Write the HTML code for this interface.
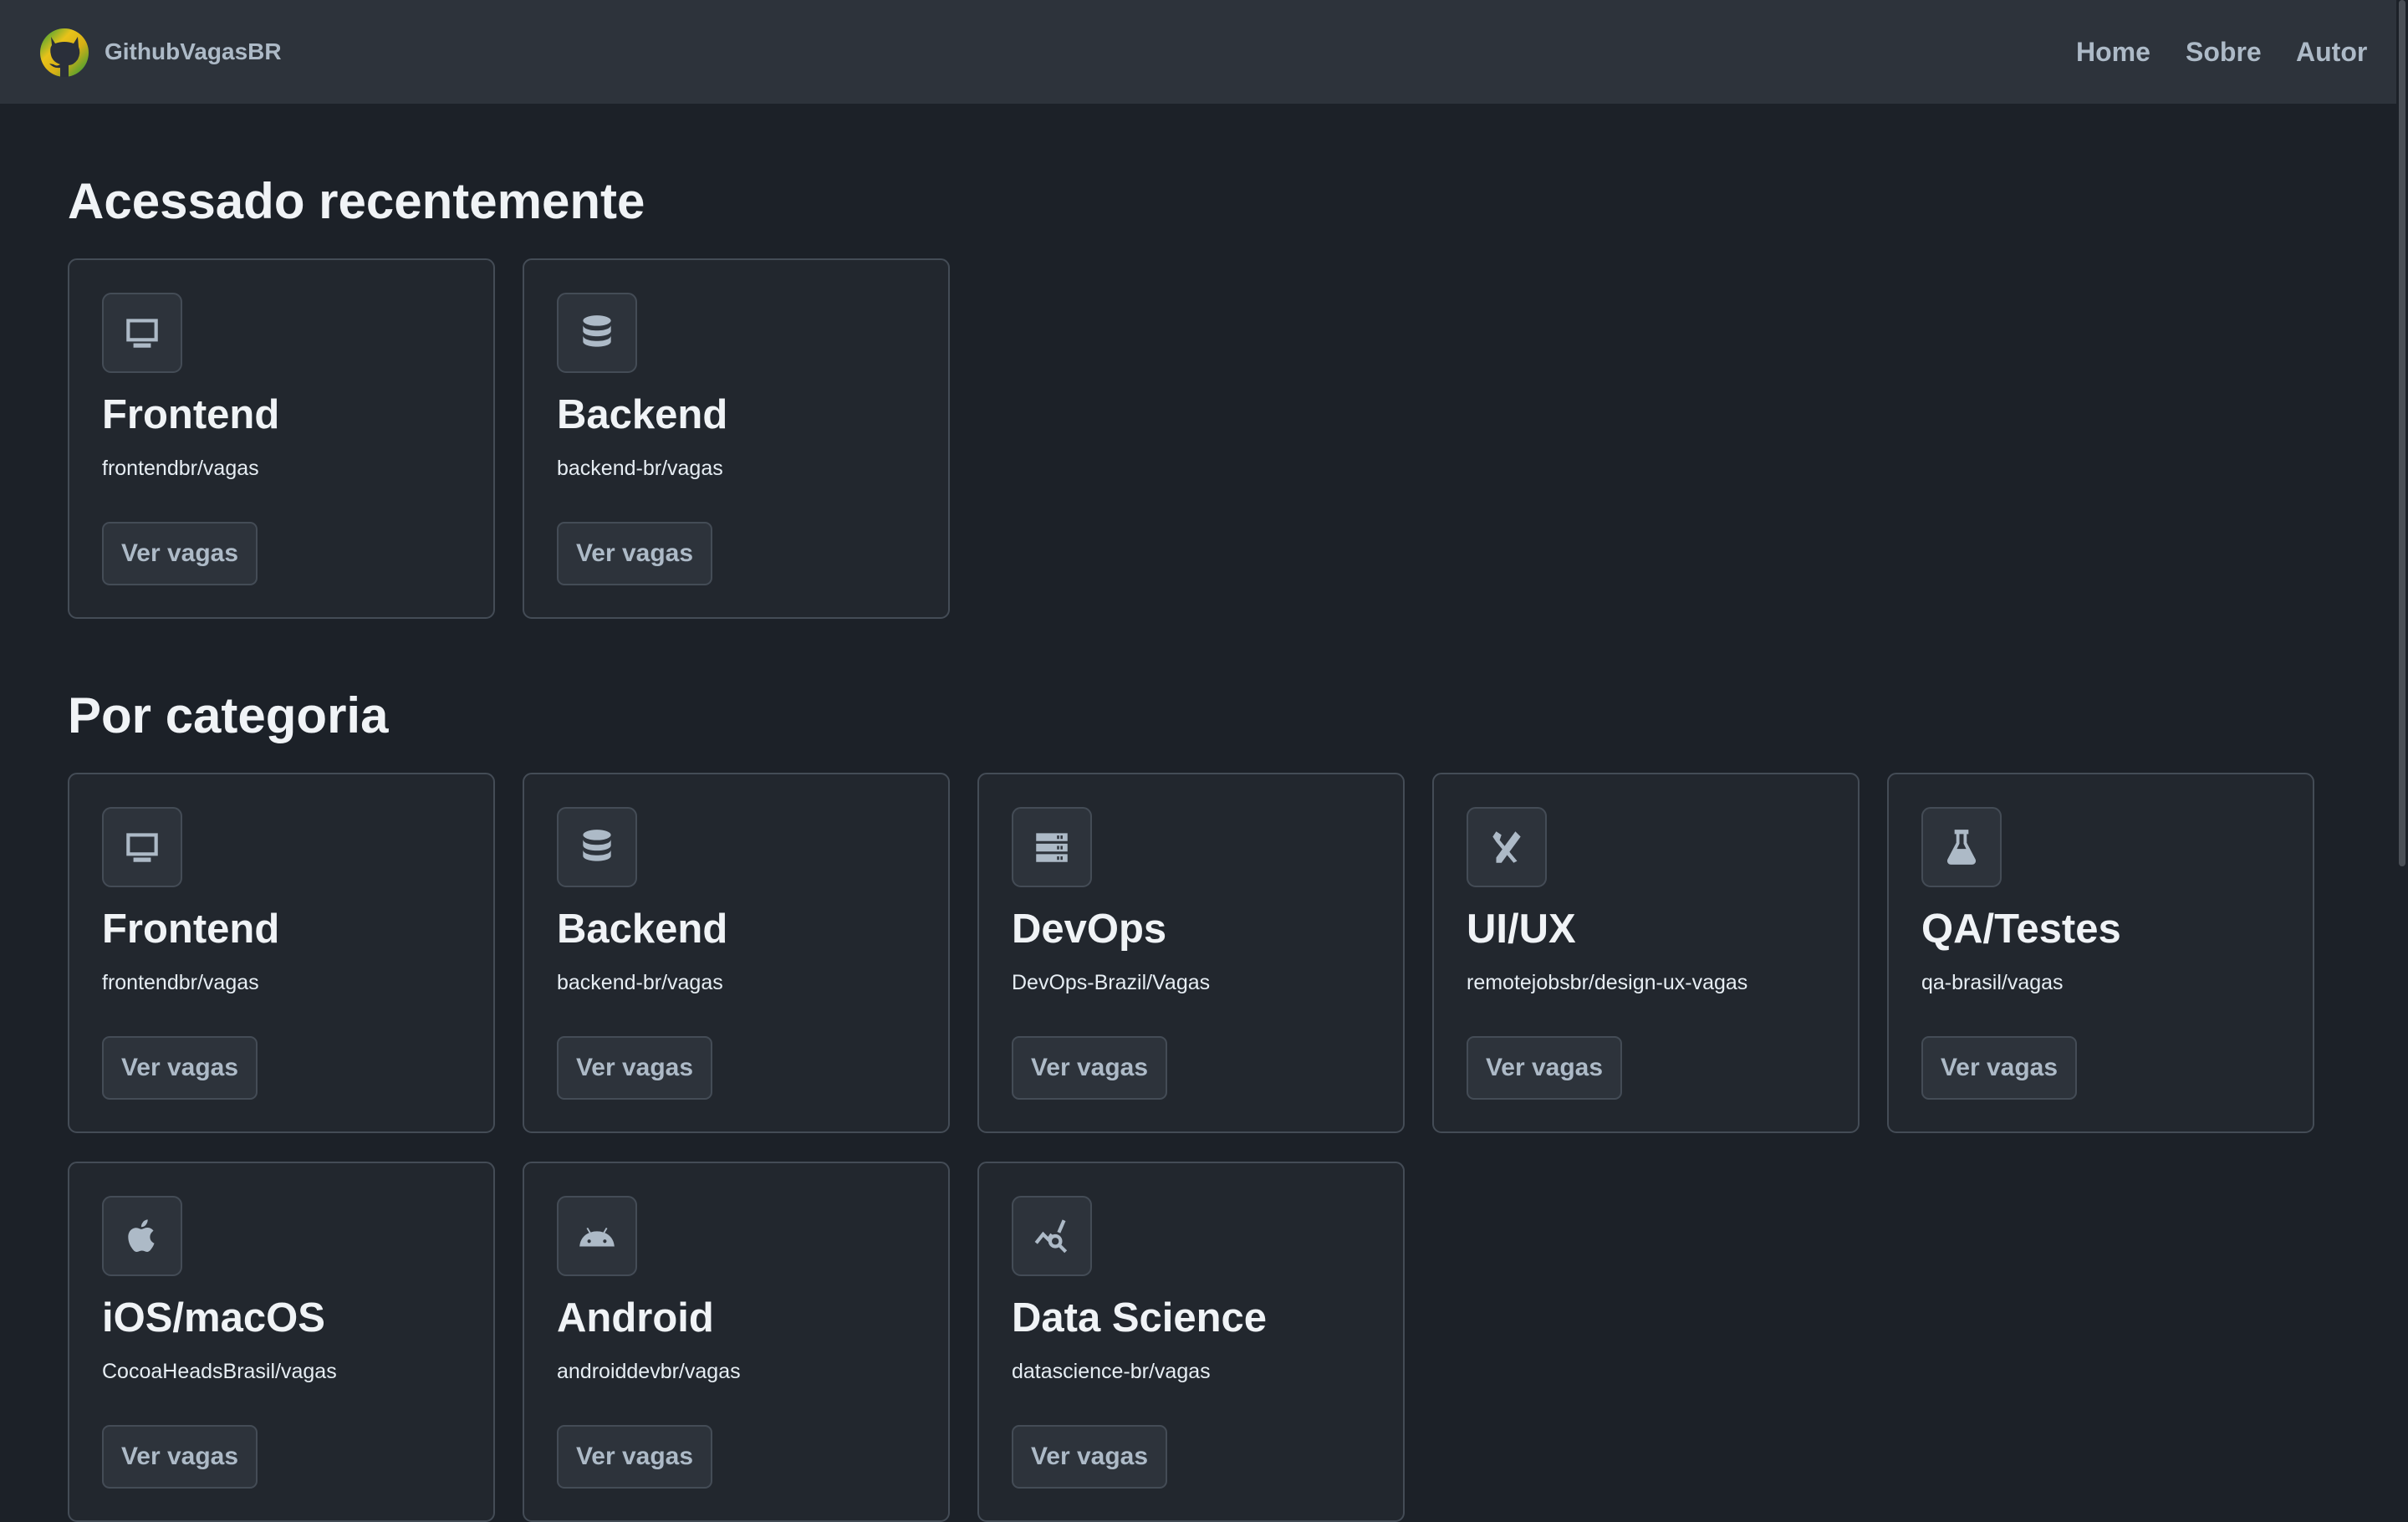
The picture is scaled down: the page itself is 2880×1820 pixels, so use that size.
<!DOCTYPE html>
<html><head><meta charset="utf-8"><style>
*{margin:0;padding:0;box-sizing:border-box}
html,body{width:2880px;height:1800px;overflow:hidden;background:#1c2128;font-family:"Liberation Sans",sans-serif}
.hdr{position:absolute;left:0;top:0;width:2866px;height:124px;background:#2d333b}
.brand{position:absolute;left:125px;top:44px;font-size:28px;font-weight:700;color:#adbac7;line-height:36px}
.nav{position:absolute;top:42px;font-size:32px;font-weight:700;color:#adbac7;line-height:40px}
h2{position:absolute;left:81px;font-size:60px;font-weight:700;color:#f0f3f6;line-height:76px}
.card{position:absolute;width:511px;height:431px;background:#22272e;border:2px solid #444c56;border-radius:11px}
.ib{position:absolute;left:39px;top:39px;width:96px;height:96px;background:#2d333b;border:2px solid #444c56;border-radius:11px;display:flex;align-items:center;justify-content:center}
.ib svg{width:50px;height:50px;fill:#adbac7}
.t{position:absolute;left:39px;top:153px;font-size:49px;font-weight:700;color:#f0f3f6;line-height:64px}
.r{position:absolute;left:39px;top:233px;font-size:25px;color:#e6edf3;line-height:32px}
.b{position:absolute;left:39px;top:313px;width:186px;height:76px;background:#2d333b;border:2px solid #444c56;border-radius:9px;font-size:30px;font-weight:700;color:#adbac7;line-height:72px;text-align:center}
.sb{position:absolute;right:0;top:0;width:14px;height:1800px;background:#1c2128}
.sb div{position:absolute;left:3px;top:0;width:8px;height:1036px;background:#4a4f56;border-radius:4px}
</style></head><body>
<div class="hdr">
<svg style="position:absolute;left:46px;top:32px" width="62" height="62" viewBox="0 0 62 62">
<defs><linearGradient id="g" x1="0" y1="0" x2="1" y2="1"><stop offset="0" stop-color="#1c9a3a"/><stop offset=".35" stop-color="#e8c21a"/><stop offset=".6" stop-color="#d8b015"/><stop offset="1" stop-color="#1c9a3a"/></linearGradient></defs>
<circle cx="31" cy="31" r="29" fill="url(#g)"/>
<path d="M15 12 L20 20 Q31 16 42 20 L47 12 L48 24 Q51 31 47 39 Q42 46 36 46 L36 60 L26 60 L26 49 Q18 50 13 44 L18 45 Q22 48 26 45 Q17 42 15 34 Q13 26 16 22 Z" fill="#2a2f3a"/>
</svg>
<div class="brand">GithubVagasBR</div>
<div class="nav" style="left:2483px">Home</div>
<div class="nav" style="left:2614px">Sobre</div>
<div class="nav" style="left:2746px">Autor</div>
</div>

<h2 style="top:203px">Acessado recentemente</h2>
<h2 style="top:818px">Por categoria</h2>

<svg width="0" height="0" style="position:absolute">
<symbol id="mon" viewBox="0 0 24 24"><path d="M3 4h18v13H3z M5 6v9h14V6z" fill-rule="evenodd"/><rect x="7" y="18" width="10" height="2.5"/></symbol>
<symbol id="db" viewBox="0 0 24 24"><ellipse cx="12" cy="5" rx="8" ry="3"/><path d="M4 7.5c0 2 3.6 3.2 8 3.2s8-1.2 8-3.2V11c0 1.8-3.6 3-8 3s-8-1.2-8-3z"/><path d="M4 13.5c0 2 3.6 3.2 8 3.2s8-1.2 8-3.2V17c0 1.8-3.6 3-8 3s-8-1.2-8-3z"/></symbol>
<symbol id="srv" viewBox="0 0 24 24"><path d="M3 4h18v4.5H3zM3 10h18v4.5H3zM3 16h18v4.5H3z"/><g fill="#2d333b"><rect x="15" y="5.3" width="1.2" height="2"/><rect x="17" y="5.3" width="1.2" height="2"/><rect x="15" y="11.3" width="1.2" height="2"/><rect x="17" y="11.3" width="1.2" height="2"/><rect x="15" y="17.3" width="1.2" height="2"/><rect x="17" y="17.3" width="1.2" height="2"/></g></symbol>
<symbol id="tool" viewBox="0 0 24 24"><path d="M6 3l3 2-1 3 10 12-2 1L6 9 4 6z"/><path d="M17 3l3 3-11 15H6v-3z"/></symbol>
<symbol id="flask" viewBox="0 0 24 24"><path d="M8 2h8v2.5h-1v5l5 9.5c.6 1.5-.3 3-2 3H6c-1.7 0-2.6-1.5-2-3l5-9.5v-5H8z M10.8 4.5v5.5l-1.5 3h5.4l-1.5-3V4.5z" fill-rule="evenodd"/></symbol>
<symbol id="apple" viewBox="0 0 24 24"><path d="M16.5 12.6c0-2.4 2-3.5 2-3.6-1.1-1.6-2.8-1.8-3.4-1.8-1.4-.1-2.8.9-3.5.9s-1.8-.8-3-.8C6.5 7.3 4 8.9 4 12.6c0 2.3.9 4.7 2 6.2.9 1.3 1.7 2.4 2.9 2.3 1.1 0 1.6-.7 3-.7s1.8.7 3 .7c1.2 0 2-1.1 2.8-2.3.9-1.3 1.2-2.5 1.3-2.6-.1 0-2.5-1-2.5-3.6zM14.2 5.5c.6-.8 1.1-1.8 1-2.9-.9 0-2.1.6-2.7 1.4-.6.7-1.1 1.8-1 2.8 1 .1 2.1-.5 2.7-1.3z"/></symbol>
<symbol id="andr" viewBox="0 0 24 24"><path d="M2 18c.3-3.7 2.4-6.6 5.5-7.8L6 7.6l.8-.4 1.6 2.7c1.1-.4 2.3-.6 3.6-.6s2.5.2 3.6.6l1.6-2.7.8.4-1.5 2.6c3.1 1.2 5.2 4.1 5.5 7.8z M7.5 14a1 1 0 100 2 1 1 0 000-2z M16.5 14a1 1 0 100 2 1 1 0 000-2z" fill-rule="evenodd"/></symbol>
<symbol id="ds" viewBox="0 0 24 24"><path d="M3 16l4-5 3 3 2-3" fill="none" stroke="#adbac7" stroke-width="2"/><path d="M19 3l-3 7" stroke="#adbac7" stroke-width="2"/><circle cx="14" cy="15" r="3" fill="none" stroke="#adbac7" stroke-width="2"/><path d="M16 17l4 4" stroke="#adbac7" stroke-width="2"/></symbol>
</svg>

<div class="card" style="left:81px;top:309px"><div class="ib"><svg><use href="#mon"/></svg></div><div class="t">Frontend</div><div class="r">frontendbr/vagas</div><div class="b">Ver vagas</div></div>
<div class="card" style="left:625px;top:309px"><div class="ib"><svg><use href="#db"/></svg></div><div class="t">Backend</div><div class="r">backend-br/vagas</div><div class="b">Ver vagas</div></div>

<div class="card" style="left:81px;top:924px"><div class="ib"><svg><use href="#mon"/></svg></div><div class="t">Frontend</div><div class="r">frontendbr/vagas</div><div class="b">Ver vagas</div></div>
<div class="card" style="left:625px;top:924px"><div class="ib"><svg><use href="#db"/></svg></div><div class="t">Backend</div><div class="r">backend-br/vagas</div><div class="b">Ver vagas</div></div>
<div class="card" style="left:1169px;top:924px"><div class="ib"><svg><use href="#srv"/></svg></div><div class="t">DevOps</div><div class="r">DevOps-Brazil/Vagas</div><div class="b">Ver vagas</div></div>
<div class="card" style="left:1713px;top:924px"><div class="ib"><svg><use href="#tool"/></svg></div><div class="t">UI/UX</div><div class="r">remotejobsbr/design-ux-vagas</div><div class="b">Ver vagas</div></div>
<div class="card" style="left:2257px;top:924px"><div class="ib"><svg><use href="#flask"/></svg></div><div class="t">QA/Testes</div><div class="r">qa-brasil/vagas</div><div class="b">Ver vagas</div></div>

<div class="card" style="left:81px;top:1389px"><div class="ib"><svg><use href="#apple"/></svg></div><div class="t">iOS/macOS</div><div class="r">CocoaHeadsBrasil/vagas</div><div class="b">Ver vagas</div></div>
<div class="card" style="left:625px;top:1389px"><div class="ib"><svg><use href="#andr"/></svg></div><div class="t">Android</div><div class="r">androiddevbr/vagas</div><div class="b">Ver vagas</div></div>
<div class="card" style="left:1169px;top:1389px"><div class="ib"><svg><use href="#ds"/></svg></div><div class="t">Data Science</div><div class="r">datascience-br/vagas</div><div class="b">Ver vagas</div></div>

<div class="sb"><div></div></div>
</body></html>
